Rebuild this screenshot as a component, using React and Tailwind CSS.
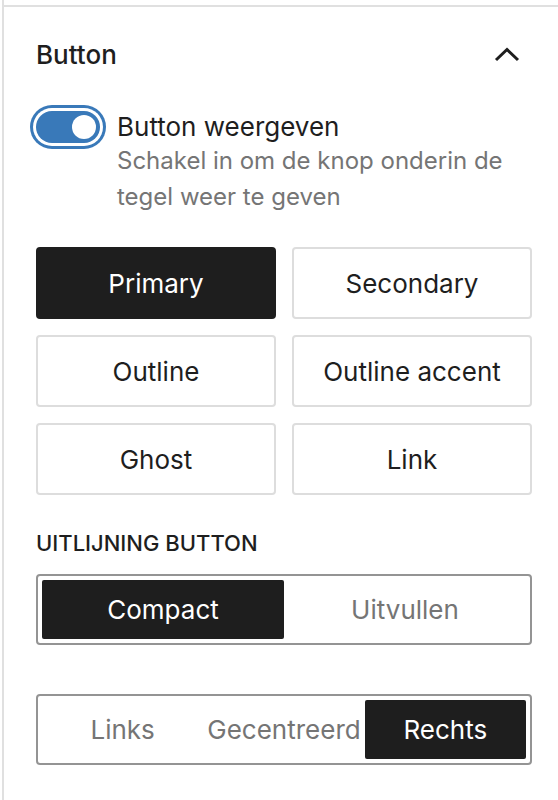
import React from "react";

const font = { fontFamily: "Inter, 'Noto Sans', 'Liberation Sans', sans-serif" };

function StyleButton({ label, active }) {
  return (
    <div
      className={
        "h-[72px] flex items-center justify-center rounded-[4px] border-2 text-[26px] " +
        (active
          ? "bg-[#1e1e1e] border-[#1e1e1e] text-white"
          : "bg-white border-[#dddddd] text-[#1e1e1e]")
      }
    >
      {label}
    </div>
  );
}

function Segmented({ options, active, cols }) {
  return (
    <div
      className={
        "h-[71px] rounded-[4px] border-2 border-[#949494] p-[4px] grid " + cols
      }
    >
      {options.map((o) => (
        <div
          key={o}
          className={
            "flex items-center justify-center rounded-[2px] text-[26px] whitespace-nowrap " +
            (o === active ? "bg-[#1e1e1e] text-white" : "text-[#757575]")
          }
        >
          {o}
        </div>
      ))}
    </div>
  );
}

export default function App() {
  return (
    <div className="w-[558px] h-[800px] bg-white pl-[2px] overflow-hidden" style={font}>
      <div className="h-full border-l-2 border-[#e0e0e0] pt-[5px]">
        <div className="border-t-2 border-[#e0e0e0] pl-[32px] pr-[26px]">
          <div className="flex items-center justify-between pt-[32px] h-[32px] box-content">
            <span className="text-[26px] leading-[32px] text-[#1e1e1e] font-medium">Button</span>
            <svg width="26" height="16" viewBox="0 0 26 16" className="mr-[12px]">
              <path d="M2 13 L13 2.5 L24 13" fill="none" stroke="#1e1e1e" strokeWidth="3" />
            </svg>
          </div>

          <div className="flex mt-[40px]">
            <div className="relative w-[64px] h-[32px] rounded-full bg-[#3979b9] shadow-[0_0_0_3px_#ffffff,0_0_0_6px_#3979b9] shrink-0">
              <div className="absolute right-[4px] top-[4px] w-[24px] h-[24px] rounded-full bg-white" />
            </div>
            <div className="ml-[17px]">
              <div className="text-[26px] leading-[32px] text-[#1e1e1e]">Button weergeven</div>
              <div className="text-[24px] leading-[36px] text-[#757575]">
                Schakel in om de knop onderin de
                <br />
                tegel weer te geven
              </div>
            </div>
          </div>

          <div className="grid grid-cols-2 gap-[16px] mt-[32px]">
            <StyleButton label="Primary" active />
            <StyleButton label="Secondary" />
            <StyleButton label="Outline" />
            <StyleButton label="Outline accent" />
            <StyleButton label="Ghost" />
            <StyleButton label="Link" />
          </div>

          <div className="mt-[32px] text-[22px] leading-[32px] font-medium uppercase text-[#1e1e1e]">
            Uitlijning button
          </div>

          <div className="mt-[15px]">
            <Segmented options={["Compact", "Uitvullen"]} active="Compact" cols="grid-cols-2" />
          </div>

          <div className="mt-[49px]">
            <Segmented
              options={["Links", "Gecentreerd", "Rechts"]}
              active="Rechts"
              cols="grid-cols-3"
            />
          </div>
        </div>
      </div>
    </div>
  );
}
